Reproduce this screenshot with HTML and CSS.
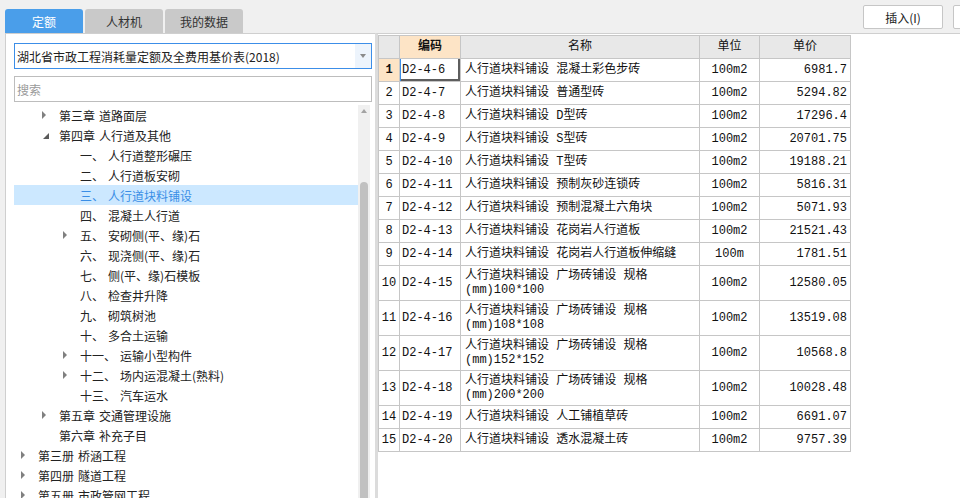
FILE: index.html
```html
<!DOCTYPE html>
<html lang="zh">
<head>
<meta charset="utf-8">
<title>定额</title>
<link rel="stylesheet" href="styles.css">
</head>
<body>
<div class="topbar">
  <div class="tabs">
    <div class="tab active">定额</div>
    <div class="tab">人材机</div>
    <div class="tab">我的数据</div>
  </div>
  <div class="actions">
    <button class="btn">插入(I)</button>
    <button class="btn"></button>
  </div>
</div>
<div class="main">
  <div class="left">
    <div class="select">
      <span class="select-text">湖北省市政工程消耗量定额及全费用基价表(2018)</span>
      <span class="select-arrow"></span>
    </div>
    <div class="search">搜索</div>
    <div class="treewrap">
      <div class="tree">
        <div class="node l1"><span class="tg c"></span><span class="no">第三章</span>道路面层</div>
        <div class="node l1"><span class="tg e"></span><span class="no">第四章</span>人行道及其他</div>
        <div class="node l2"><span class="tg"></span><span class="no">一、</span>人行道整形碾压</div>
        <div class="node l2"><span class="tg"></span><span class="no">二、</span>人行道板安砌</div>
        <div class="node l2 sel"><span class="tg"></span><span class="no">三、</span>人行道块料铺设</div>
        <div class="node l2"><span class="tg"></span><span class="no">四、</span>混凝土人行道</div>
        <div class="node l2"><span class="tg c"></span><span class="no">五、</span>安砌侧(平、缘)石</div>
        <div class="node l2"><span class="tg"></span><span class="no">六、</span>现浇侧(平、缘)石</div>
        <div class="node l2"><span class="tg"></span><span class="no">七、</span>侧(平、缘)石模板</div>
        <div class="node l2"><span class="tg"></span><span class="no">八、</span>检查井升降</div>
        <div class="node l2"><span class="tg"></span><span class="no">九、</span>砌筑树池</div>
        <div class="node l2"><span class="tg"></span><span class="no">十、</span>多合土运输</div>
        <div class="node l2"><span class="tg c"></span><span class="no">十一、</span>运输小型构件</div>
        <div class="node l2"><span class="tg c"></span><span class="no">十二、</span>场内运混凝土(熟料)</div>
        <div class="node l2"><span class="tg"></span><span class="no">十三、</span>汽车运水</div>
        <div class="node l1"><span class="tg c"></span><span class="no">第五章</span>交通管理设施</div>
        <div class="node l1"><span class="tg"></span><span class="no">第六章</span>补充子目</div>
        <div class="node l0"><span class="tg c"></span><span class="no">第三册</span>桥涵工程</div>
        <div class="node l0"><span class="tg c"></span><span class="no">第四册</span>隧道工程</div>
        <div class="node l0"><span class="tg c"></span><span class="no">第五册</span>市政管网工程</div>
      </div>
      <div class="vscroll">
        <div class="up"></div>
        <div class="thumb"></div>
      </div>
    </div>
  </div>
  <div class="right">
    <table class="grid">
      <colgroup>
        <col class="c-rn"><col class="c-code"><col class="c-name"><col class="c-unit"><col class="c-price">
      </colgroup>
      <thead>
        <tr><th></th><th class="hl">编码</th><th>名称</th><th>单位</th><th>单价</th></tr>
      </thead>
      <tbody>
        <tr><td class="rn hl">1</td><td class="focus">D2-4-6</td><td class="name">人行道块料铺设 混凝土彩色步砖</td><td class="unit">100m2</td><td class="price">6981.7</td></tr>
        <tr><td class="rn">2</td><td>D2-4-7</td><td class="name">人行道块料铺设 普通型砖</td><td class="unit">100m2</td><td class="price">5294.82</td></tr>
        <tr><td class="rn">3</td><td>D2-4-8</td><td class="name">人行道块料铺设 D型砖</td><td class="unit">100m2</td><td class="price">17296.4</td></tr>
        <tr><td class="rn">4</td><td>D2-4-9</td><td class="name">人行道块料铺设 S型砖</td><td class="unit">100m2</td><td class="price">20701.75</td></tr>
        <tr><td class="rn">5</td><td>D2-4-10</td><td class="name">人行道块料铺设 T型砖</td><td class="unit">100m2</td><td class="price">19188.21</td></tr>
        <tr><td class="rn">6</td><td>D2-4-11</td><td class="name">人行道块料铺设 预制灰砂连锁砖</td><td class="unit">100m2</td><td class="price">5816.31</td></tr>
        <tr><td class="rn">7</td><td>D2-4-12</td><td class="name">人行道块料铺设 预制混凝土六角块</td><td class="unit">100m2</td><td class="price">5071.93</td></tr>
        <tr><td class="rn">8</td><td>D2-4-13</td><td class="name">人行道块料铺设 花岗岩人行道板</td><td class="unit">100m2</td><td class="price">21521.43</td></tr>
        <tr><td class="rn">9</td><td>D2-4-14</td><td class="name">人行道块料铺设 花岗岩人行道板伸缩缝</td><td class="unit">100m</td><td class="price">1781.51</td></tr>
        <tr class="tall"><td class="rn">10</td><td>D2-4-15</td><td class="name">人行道块料铺设 广场砖铺设 规格<br>(mm)100*100</td><td class="unit">100m2</td><td class="price">12580.05</td></tr>
        <tr class="tall"><td class="rn">11</td><td>D2-4-16</td><td class="name">人行道块料铺设 广场砖铺设 规格<br>(mm)108*108</td><td class="unit">100m2</td><td class="price">13519.08</td></tr>
        <tr class="tall"><td class="rn">12</td><td>D2-4-17</td><td class="name">人行道块料铺设 广场砖铺设 规格<br>(mm)152*152</td><td class="unit">100m2</td><td class="price">10568.8</td></tr>
        <tr class="tall"><td class="rn">13</td><td>D2-4-18</td><td class="name">人行道块料铺设 广场砖铺设 规格<br>(mm)200*200</td><td class="unit">100m2</td><td class="price">10028.48</td></tr>
        <tr><td class="rn">14</td><td>D2-4-19</td><td class="name">人行道块料铺设 人工铺植草砖</td><td class="unit">100m2</td><td class="price">6691.07</td></tr>
        <tr><td class="rn">15</td><td>D2-4-20</td><td class="name">人行道块料铺设 透水混凝土砖</td><td class="unit">100m2</td><td class="price">9757.39</td></tr>
      </tbody>
    </table>
  </div>
</div>
</body>
</html>
```
FILE: styles.css
```css
html, body {
  margin: 0;
  padding: 0;
}
body {
  width: 960px;
  height: 498px;
  overflow: hidden;
  background: #ffffff;
  color: #222222;
  font-family: "Noto Sans CJK SC", "Noto Sans", sans-serif;
  font-size: 12px;
}

/* top bar */
.topbar {
  height: 33px;
  background: #f0f0f0;
  display: flex;
  justify-content: space-between;
  align-items: flex-start;
  overflow: hidden;
}
.tabs {
  display: flex;
  gap: 2px;
  padding: 9px 0 0 5px;
}
.tab {
  width: 78px;
  height: 24px;
  display: flex;
  align-items: center;
  justify-content: center;
  background: #c9c9c9;
  color: #333333;
  border-radius: 3px 3px 0 0;
  font-size: 12px;
}
.tab.active {
  background: #4a9eea;
  color: #ffffff;
}
.actions {
  display: flex;
  gap: 10px;
  padding-top: 5px;
  margin-right: -73px;
}
.btn {
  width: 80px;
  height: 24px;
  box-sizing: border-box;
  border: 1px solid #c6c6c6;
  border-radius: 2px;
  background: #ffffff;
  color: #222222;
  font-family: "Noto Sans CJK SC", "Noto Sans", sans-serif;
  font-size: 12px;
  padding: 0;
  display: flex;
  align-items: center;
  justify-content: center;
}

/* main */
.main {
  display: flex;
  height: 465px;
  background: #f0f0f0;
  padding-left: 5px;
}
.left {
  width: 370px;
  flex: none;
  box-sizing: border-box;
  background: #ffffff;
  border-left: 1px solid #cfcfcf;
  border-top: 1px solid #cfcfcf;
  padding: 9px 3px 0 8px;
  display: flex;
  flex-direction: column;
}
.select {
  height: 26px;
  box-sizing: border-box;
  border: 1px solid #3c8ee8;
  display: flex;
  align-items: stretch;
  flex: none;
}
.select-text {
  flex: 1;
  padding-left: 2px;
  display: flex;
  align-items: center;
  color: #222222;
}
.select-arrow {
  width: 16px;
  background: #edf4fc;
  display: flex;
  align-items: center;
  justify-content: center;
}
.select-arrow::before {
  content: "";
  border-top: 4px solid #8a8a8a;
  border-left: 3.5px solid transparent;
  border-right: 3.5px solid transparent;
}
.search {
  flex: none;
  margin-top: 7px;
  height: 26px;
  box-sizing: border-box;
  border: 1px solid #bdbdbd;
  padding-left: 2px;
  color: #9a9a9a;
  display: flex;
  align-items: center;
}
.treewrap {
  margin-top: 3px;
  flex: 1;
  min-height: 0;
  display: flex;
}
.tree {
  flex: 1;
  overflow: hidden;
}
.node {
  height: 20px;
  display: flex;
  align-items: center;
  white-space: nowrap;
  color: #222222;
}
.l0 { padding-left: 7px; }
.l1 { padding-left: 28px; }
.l2 { padding-left: 49px; }
.tg {
  width: 17px;
  flex: none;
  display: flex;
  align-items: center;
}
.tg.c::before {
  content: "";
  border-left: 4px solid #808080;
  border-top: 4px solid transparent;
  border-bottom: 4px solid transparent;
}
.tg.e::before {
  content: "";
  margin-left: 1px;
  margin-top: 2px;
  border-bottom: 6px solid #5a5a5a;
  border-left: 6px solid transparent;
}
.no {
  margin-right: 4px;
}
.node.sel {
  background: #cce8ff;
  color: #3a8ee6;
}
.vscroll {
  width: 12px;
  flex: none;
  margin-right: 2px;
  background: #f0f0f0;
  display: flex;
  flex-direction: column;
  align-items: center;
}
.up {
  height: 12px;
  display: flex;
  align-items: center;
}
.up::before {
  content: "";
  border-bottom: 4px solid #a3a3a3;
  border-left: 3.5px solid transparent;
  border-right: 3.5px solid transparent;
}
.thumb {
  margin-top: 65px;
  width: 8px;
  flex: 1;
  background: #c1c1c1;
  border-radius: 4px 4px 0 0;
}

/* right table */
.right {
  flex: 1;
  background: #ffffff;
  border-left: 3px solid #dcdcdc;
  border-top: 1px solid #cfcfcf;
  padding-top: 1px;
}
.grid {
  border-collapse: separate;
  border-spacing: 0;
  table-layout: fixed;
  width: 473px;
  border-top: 1px solid #c6c6c6;
  border-left: 1px solid #c6c6c6;
  font-family: "Liberation Mono", "Noto Sans CJK SC", monospace;
  font-size: 12px;
  color: #111111;
}
.c-rn { width: 21px; }
.c-code { width: 61px; }
.c-name { width: 239px; }
.c-unit { width: 60px; }
.c-price { width: 91px; }
.grid th,
.grid td {
  box-sizing: border-box;
  height: 23px;
  padding: 0 2px;
  border-right: 1px solid #c6c6c6;
  border-bottom: 1px solid #c6c6c6;
  line-height: 14px;
  white-space: nowrap;
  overflow: hidden;
  text-align: left;
  vertical-align: middle;
}
.grid th {
  background: #e8e8e8;
  font-weight: normal;
  text-align: center;
}
.grid th.hl {
  background: #fde4c6;
  font-weight: bold;
}
.grid td.rn {
  text-align: center;
  padding: 0;
}
.grid td.rn.hl {
  background: #fde4c6;
  font-weight: bold;
}
.grid td.name {
  padding-left: 4px;
}
.grid td.unit {
  text-align: center;
}
.grid td.price {
  text-align: right;
  padding-right: 3px;
}
.grid tr.tall td {
  height: 35px;
}
.grid td.focus {
  box-shadow: inset 1px 0 0 #3d8ee6, inset -2px -2px 0 #5e5e5e;
}
```
